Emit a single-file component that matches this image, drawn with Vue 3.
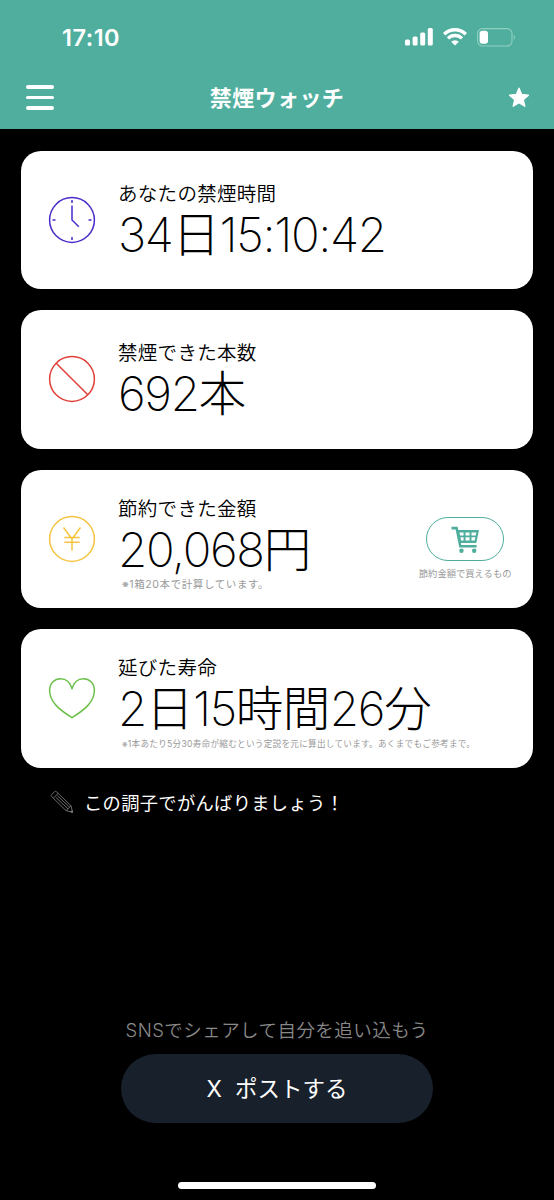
<script setup>
import { ref } from "vue";

const cards = ref([
    {
        icon: "clock",
        label: "あなたの禁煙時間",
        value: [["34", "num"], ["日", "unit"], ["15:10:42", "num"]],
    },
    {
        icon: "ban",
        label: "禁煙できた本数",
        value: [["692", "num"], ["本", "unit"]],
    },
    {
        icon: "yen",
        label: "節約できた金額",
        value: [["20,068", "num"], ["円", "unit"]],
        note: "※1箱20本で計算しています。",
        shop: "節約金額で買えるもの",
    },
    {
        icon: "heart",
        label: "延びた寿命",
        value: [["2", "num"], ["日", "unit"], ["15", "num"], ["時間", "unit"], ["26", "num"], ["分", "unit"]],
        note: "※1本あたり5分30寿命が縮むという定説を元に算出しています。あくまでもご参考まで。",
    },
]);
</script>

<template>
  <div class="screen">
    <header class="header">
      <div class="status-bar">
        <span class="time">17:10</span>
        <div class="status-icons">
          <svg width="28" height="18" viewBox="0 0 28 18" fill="#fff">
            <rect x="0" y="11.5" width="5" height="6" rx="1.5" />
            <rect x="7.6" y="8.5" width="5" height="9" rx="1.5" />
            <rect x="15.2" y="4.5" width="5" height="13" rx="1.5" />
            <rect x="22.8" y="0" width="5" height="17.5" rx="1.5" />
          </svg>
          <svg class="wifi" width="24" height="18" viewBox="0 0 24 18" fill="none" stroke="#fff" stroke-width="3.4">
            <path d="M1.2 6.2A15.5 15.5 0 0 1 22.8 6.2" />
            <path d="M5 10.4A10 10 0 0 1 19 10.4" />
            <path d="M12 17.5L8.2 13.8A5.3 5.3 0 0 1 15.8 13.8Z" fill="#fff" stroke="none" />
          </svg>
          <svg class="battery" width="40" height="19" viewBox="0 0 40 19">
            <rect x="0.6" y="0.6" width="34.4" height="17.4" rx="5" fill="none" stroke="#8fd0c2" stroke-width="1.1" />
            <rect x="2.6" y="2.8" width="8.4" height="13" rx="2.8" fill="#fff" />
            <path d="M36.8 6.5Q39.2 9.3 36.8 12.2Z" fill="#8fd0c2" />
          </svg>
        </div>
      </div>
      <div class="nav-bar">
        <button class="menu-button" aria-label="menu">
          <span></span>
          <span></span>
          <span></span>
        </button>
        <h1 class="title">禁煙ウォッチ</h1>
        <svg class="star" width="22" height="21" viewBox="0 0 22 21">
          <path d="M11 1.2L13.6 7.5L20.4 8.1L15.2 12.6L16.8 19.2L11 15.7L5.2 19.2L6.8 12.6L1.6 8.1L8.4 7.5Z" fill="#fff" stroke="#fff" stroke-width="1.4" stroke-linejoin="round" />
        </svg>
      </div>
    </header>

    <main class="cards">
      <section v-for="card in cards" :key="card.icon" class="card" :class="card.icon">
        <svg class="card-icon" width="48" height="48" viewBox="0 0 48 48" fill="none" stroke-width="1.5">
          <g v-if="card.icon === 'clock'" stroke="#4a2bc8">
            <circle cx="24" cy="24" r="22.4" />
            <path d="M24 9.5V24L30.8 30.8M24 4V7M24 41V44M4.5 24H7.5M40.5 24H43.5" />
          </g>
          <g v-if="card.icon === 'ban'" stroke="#e04038">
            <circle cx="24" cy="24" r="22.4" />
            <path d="M8.2 8.2L39.8 39.8" />
          </g>
          <g v-if="card.icon === 'yen'" stroke="#f5c443">
            <circle cx="24" cy="24" r="22.4" />
            <path d="M15.5 12.5L24 24L32.5 12.5M24 24V35.5M16.3 22.6H31.7M16.3 27.2H31.7" />
          </g>
          <g v-if="card.icon === 'heart'" stroke="#6cc04a" stroke-linejoin="round">
            <path d="M24 14.8C22 8 17.8 4.8 12.6 4.8C6.4 4.8 1.6 9.6 1.6 16.2C1.6 28.2 12 36.2 24 43.6C36 36.2 46.4 28.2 46.4 16.2C46.4 9.6 41.6 4.8 35.4 4.8C30.2 4.8 26 8 24 14.8Z" />
          </g>
        </svg>
        <div class="card-body">
          <p class="label">{{ card.label }}</p>
          <p class="value">
            <span v-for="(part, i) in card.value" :key="i" :class="part[1]">{{ part[0] }}</span>
          </p>
          <p v-if="card.note" class="note">{{ card.note }}</p>
        </div>
        <div v-if="card.shop" class="shop">
          <button class="shop-button" aria-label="cart">
            <svg width="29" height="28" viewBox="0 0 30 29">
              <path d="M0.5 2.2H5.8L9.6 21H26.5" fill="none" stroke="#50ae9e" stroke-width="2.6" />
              <path d="M6 4.2H29L26.2 17.6H8.5Z" fill="#50ae9e" />
              <path d="M8.8 6.7H13V9.9H9.4ZM15 6.7H19.2V9.9H15ZM21.2 6.7H26.2L25.6 9.9H21.2ZM9.8 11.7H13V14.9H10.4ZM15 11.7H19.2V14.9H15ZM21.2 11.7H25.2L24.5 14.9H21.2Z" fill="#fff" />
              <circle cx="10.8" cy="25.6" r="2.3" fill="#50ae9e" />
              <circle cx="24" cy="25.6" r="2.3" fill="#50ae9e" />
            </svg>
          </button>
          <span class="shop-text">{{ card.shop }}</span>
        </div>
      </section>
    </main>

    <div class="message">
      <svg width="24" height="24" viewBox="0 0 24 24" fill="none" stroke="#777" stroke-width="0.9" stroke-linejoin="round">
        <path d="M1.5 6.4Q0.8 5.5 1.6 4.6L4.6 1.7Q5.6 1 6.5 1.8L21 15.8L22.6 22.4L16 20.6ZM3.3 8.2L8.2 3.4M5.8 7.4L18 18.8M7.4 5.8L19.7 17.2M16 20.6L18 18.8L19.7 17.2L21 15.8" />
        <path d="M20.6 21.9L22.6 22.4L22.1 20.4Z" fill="#777" />
      </svg>
      <span>この調子でがんばりましょう！</span>
    </div>

    <footer class="share">
      <p class="share-text">SNSでシェアして自分を追い込もう</p>
      <button class="post-button"><span>X</span>ポストする</button>
      <div class="home-bar"></div>
    </footer>
  </div>
</template>

<style>
body {
  margin: 0;
  background: #000;
}
</style>

<style scoped>
.screen {
  display: flex;
  flex-direction: column;
  width: 554px;
  height: 1200px;
  overflow: hidden;
  background: #000;
  font-family: Inter, "Noto Sans CJK JP", sans-serif;
}

h1,
p {
  margin: 0;
}

button {
  border: none;
  padding: 0;
  font-family: inherit;
}

.header {
  height: 129px;
  background: #50ae9e;
  color: #fff;
}

.status-bar {
  display: flex;
  justify-content: space-between;
  align-items: center;
  height: 74px;
  padding: 0 37px 0 62px;
}

.time {
  font-size: 23.5px;
  font-weight: 600;
  letter-spacing: 0.5px;
}

.status-icons {
  display: flex;
  align-items: center;
}

.wifi {
  margin-left: 10px;
}

.battery {
  margin-left: 10px;
}

.nav-bar {
  display: grid;
  grid-template-columns: 1fr auto 1fr;
  align-items: center;
  height: 47px;
  padding: 0 24px 0 26px;
}

.menu-button {
  display: flex;
  flex-direction: column;
  gap: 7px;
  width: 28px;
  background: none;
}

.menu-button span {
  width: 28px;
  height: 3.5px;
  border-radius: 2px;
  background: #fff;
}

.title {
  margin-right: 2px;
  font-size: 22px;
  line-height: 30px;
  font-weight: 600;
  letter-spacing: 0.4px;
}

.star {
  justify-self: end;
}

.cards {
  display: flex;
  flex-direction: column;
  gap: 21px;
  padding: 21.5px 21.5px 0 21px;
}

.card {
  display: flex;
  box-sizing: border-box;
  height: 138.5px;
  padding: 0 21px 0 27px;
  border-radius: 20px;
  background: #fff;
  color: #000;
}

.card-icon {
  flex: none;
  align-self: center;
}

.card-body {
  flex: 1;
  padding: 30px 0 0 22px;
  white-space: nowrap;
}

.ban .card-body {
  padding-top: 29.5px;
}

.yen .card-body {
  padding-top: 26px;
}

.heart .card-body {
  padding-top: 26px;
}

.label {
  font-size: 19.5px;
  line-height: 26px;
  font-weight: 350;
  letter-spacing: 0.3px;
}

.value {
  height: 56px;
  font-size: 47.5px;
  line-height: 56px;
}

.num {
  font-weight: 250;
  letter-spacing: -1.35px;
  font-feature-settings: "calt" 0;
}

.unit {
  font-weight: 300;
  letter-spacing: -0.5px;
}

.note {
  height: 14px;
  padding-left: 4px;
  font-size: 10.5px;
  line-height: 14px;
  letter-spacing: 0.6px;
  color: #999;
}

.heart .note {
  font-size: 8.6px;
  letter-spacing: 0.28px;
}

.shop {
  display: flex;
  flex-direction: column;
  align-items: center;
  padding-top: 47px;
}

.shop-button {
  display: flex;
  justify-content: center;
  align-items: center;
  box-sizing: border-box;
  width: 78px;
  height: 44px;
  padding-top: 2px;
  border: 1.4px solid #50ae9e;
  border-radius: 22px;
  background: #fff;
}

.shop-text {
  margin-top: 6px;
  font-size: 9.3px;
  line-height: 14px;
  color: #999;
}

.message {
  display: flex;
  align-items: center;
  gap: 10px;
  margin-top: 20px;
  padding-left: 50px;
  height: 28px;
  color: #fff;
  font-size: 18.3px;
  letter-spacing: 0.3px;
}

.share {
  display: flex;
  flex-direction: column;
  align-items: center;
  margin-top: auto;
}

.share-text {
  font-size: 18.5px;
  line-height: 26px;
  font-weight: 350;
  letter-spacing: 0.45px;
  color: #888;
}

.post-button {
  width: 312px;
  height: 69px;
  margin-top: 11px;
  padding-bottom: 3px;
  border-radius: 35px;
  background: #18202b;
  color: #fff;
  font-size: 22.5px;
}

.post-button span {
  margin-right: 13px;
}

.home-bar {
  width: 198px;
  height: 7px;
  margin: 59px 0 11px;
  border-radius: 4px;
  background: #fff;
}
</style>
